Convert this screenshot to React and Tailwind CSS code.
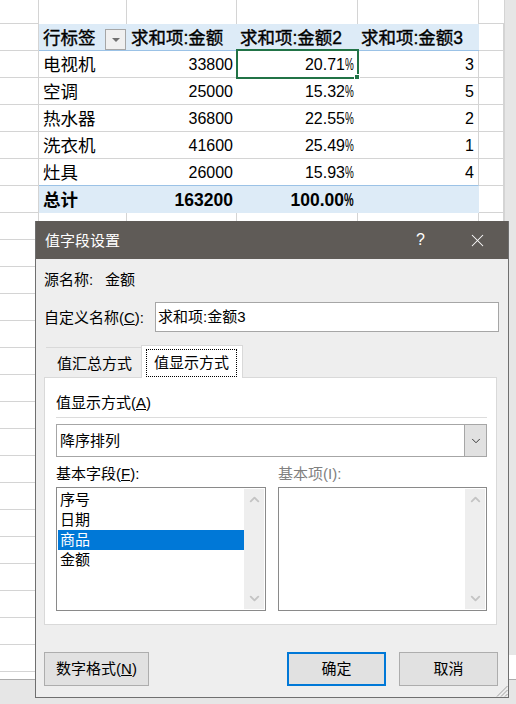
import React from 'react';
import { ChevronDown, ChevronUp, X } from 'lucide-react';

const rows = [
  ['电视机', '33800', '20.71', '3'],
  ['空调', '25000', '15.32', '5'],
  ['热水器', '36800', '22.55', '2'],
  ['洗衣机', '41600', '25.49', '1'],
  ['灶具', '26000', '15.93', '4'],
];

const headClass = "bg-[#ddebf7] !border-r-0 border-b-[#9bc2e6] text-[17.5px] [-webkit-text-stroke:0.35px_black]";
const totalClass = "bg-[#ddebf7] !border-r-0 !border-b-0 font-bold";

// the narrow percent sign of the sheet font
const Percent = ({ value, bold }) => (
  <>
    {value}
    <span className={`inline-block origin-left scale-x-[0.62] ${bold ? 'w-[10px] text-[17.5px]' : 'w-[9px] text-[16px]'}`}>%</span>
  </>
);

const Cell = ({ className = '', children }) => (
  <div className={`h-[27px] pt-[2px] border-r border-b border-[#d4d4d4] flex items-center whitespace-nowrap ${className}`}>
    {children}
  </div>
);

const Blank = ({ count }) =>
  Array.from({ length: count }).map((_, i) => <Cell key={i} />);

const Sheet = () => (
  <div className="flex-1 overflow-hidden">
    <div className="grid grid-cols-[39px_88px_110px_121px_121px_25px] text-black">
      {/* top strip */}
      <div className="h-[24px] border-r border-b border-[#d4d4d4]" />
      <div className="h-[24px] border-r border-[#d4d4d4]" />
      <div className="h-[24px] border-r border-[#d4d4d4]" />
      <div className="h-[24px] border-r border-[#d4d4d4]" />
      <div className="h-[24px] border-r border-[#d4d4d4]" />
      <div className="h-[24px] border-b border-[#d4d4d4]" />

      {/* header */}
      <Cell />
      <Cell className={`${headClass} pl-[4px] pr-[1px] justify-between`}>
        <span>行标签</span>
        <span className="self-end w-[21px] h-[21px] border border-[#a6a6a6] bg-[#f0f0f0] flex items-center justify-center">
          <span className="border-x-[4px] border-x-transparent border-t-[4px] border-t-[#707070]" />
        </span>
      </Cell>
      <Cell className={`${headClass} pl-[4px]`}>求和项:金额</Cell>
      <Cell className={`${headClass} pl-[3px]`}>求和项:金额2</Cell>
      <Cell className={`${headClass} pl-[3px]`}>求和项:金额3</Cell>
      <Cell />

      {/* data */}
      {rows.map((r, i) => (
        <React.Fragment key={r[0]}>
          <Cell />
          <Cell className={`pl-[4px] text-[17.5px] !border-r-0 ${i === 4 ? 'border-b-[#9bc2e6]' : ''}`}>{r[0]}</Cell>
          <Cell className={`justify-end pr-[4px] text-[16px] !border-r-0 ${i === 4 ? 'border-b-[#9bc2e6]' : ''}`}>{r[1]}</Cell>
          <Cell className={`relative justify-end pr-[4px] text-[16px] !border-r-0 ${i === 4 ? 'border-b-[#9bc2e6]' : ''}`}>
            <Percent value={r[2]} />
            {i === 0 && (
              <>
                <span className="absolute left-[-1px] right-[-1px] top-[-2px] bottom-[-2px] border-2 border-[#217346]" />
                <span className="absolute right-[-2px] bottom-[-3px] w-[6px] h-[6px] bg-[#217346] border border-white" />
              </>
            )}
          </Cell>
          <Cell className={`justify-end pr-[4px] text-[16px] ${i === 4 ? 'border-b-[#9bc2e6]' : ''}`}>{r[3]}</Cell>
          <Cell />
        </React.Fragment>
      ))}

      {/* total */}
      <Cell />
      <Cell className={`${totalClass} pl-[4px] text-[17.5px]`}>总计</Cell>
      <Cell className={`${totalClass} justify-end pr-[4px] text-[17.5px]`}>163200</Cell>
      <Cell className={`${totalClass} justify-end pr-[4px] text-[17.5px]`}>
        <Percent value="100.00" bold />
      </Cell>
      <Cell className={totalClass} />
      <Cell />

      <Blank count={102} />
    </div>
  </div>
);

const ListBox = ({ items, selected, className = '' }) => (
  <div className={`h-[124px] border border-[#8a8a8a] bg-white p-px flex ${className}`}>
    <div className="flex-1 pt-px">
      {items.map((item) => (
        <div
          key={item}
          className={`h-[20px] pl-[2px] leading-[20px] ${item === selected ? 'bg-[#0078d7] text-white' : ''}`}
        >
          {item}
        </div>
      ))}
    </div>
    <div className="w-[20px] bg-[#eeeeee] flex flex-col items-center justify-between py-[3px] text-[#c4c4c4]">
      <ChevronUp size={15} strokeWidth={3} />
      <ChevronDown size={15} strokeWidth={3} />
    </div>
  </div>
);

const Button = ({ className = '', children }) => (
  <button className={`h-[34px] bg-[#e1e1e1] border border-[#adadad] text-[15px] ${className}`}>
    {children}
  </button>
);

const Dialog = () => (
  <div className="absolute left-[35px] top-[221px] w-[474px] h-[477px] bg-[#eeeeee] border border-[#6f6f6f] border-t-0 text-[15px] text-black flex flex-col leading-[20px]">
    <div className="h-[38px] bg-[#5f5b57] text-white flex items-center pl-[9px]">
      <span className="flex-1 pt-px">值字段设置</span>
      <span className="text-[16px] mr-[42px]">?</span>
      <X size={21} strokeWidth={1.2} className="mr-[20px] text-white" />
    </div>

    <div className="flex items-center h-[20px] mt-[11px] pl-[8px]">
      <span className="w-[61px]">源名称:</span>
      <span>金额</span>
    </div>

    <div className="flex items-center h-[30px] mt-[12px] pl-[8px]">
      <span className="w-[111px] whitespace-nowrap pt-px">
        自定义名称(<span className="underline">C</span>):
      </span>
      <div className="w-[344px] h-[30px] bg-white border border-[#a6a6a6] pl-[2px] flex items-center">
        求和项:金额3
      </div>
    </div>

    <div className="ml-[8px] mr-[11px] mt-[13px] flex flex-col flex-1">
      <div className="flex items-end h-[32px] pl-[2px] relative z-10">
        <div className="w-[95px] h-[30px] border-t border-[#d9d9d9] pl-[11px] pt-[6px]">值汇总方式</div>
        <div className="w-[102px] h-[33px] -mb-px bg-white border border-b-0 border-[#d9d9d9] pt-[3px] pl-[4px] pr-[5px]">
          <div className="h-[28px] border border-dotted border-black text-center leading-[26px]">值显示方式</div>
        </div>
      </div>

      <div className="h-[248px] bg-white border border-[#d9d9d9] pl-[11px] pr-[9px]">
        <div className="h-[40px] pt-[15px] border-b border-[#dcdcdc]">
          值显示方式(<span className="underline">A</span>)
        </div>
        <div className="mt-[6px] h-[33px] border border-[#a6a6a6] flex items-stretch">
          <span className="flex-1 pl-[3px] flex items-center">降序排列</span>
          <span className="w-[22px] bg-[#e1e1e1] border-l border-[#a6a6a6] flex items-center justify-center text-[#222]">
            <ChevronDown size={14} strokeWidth={1.5} />
          </span>
        </div>
        <div className="grid grid-cols-[210px_209px] gap-x-[12px] mt-[6px]">
          <div className="h-[24px] pt-px">基本字段(<span className="underline">F</span>):</div>
          <div className="h-[24px] pt-px text-[#808080]">基本项(I):</div>
          <ListBox items={['序号', '日期', '商品', '金额']} selected="商品" />
          <ListBox items={[]} />
        </div>
      </div>
    </div>

    <div className="flex items-center pl-[8px] pr-[10px] pb-[11px] relative">
      <Button className="w-[105px]">
        数字格式(<span className="underline">N</span>)
      </Button>
      <Button className="w-[99px] ml-auto !border-2 !border-[#0078d7]">确定</Button>
      <Button className="w-[99px] ml-[13px]">取消</Button>
      <svg className="absolute right-0 bottom-0" width="12" height="12" viewBox="0 0 12 12" stroke="#a0a0a0" strokeWidth="1">
        <path d="M11.5 1 L1 11.5 M11.5 5 L5 11.5 M11.5 9 L9 11.5" />
      </svg>
    </div>
  </div>
);

export default function App() {
  return (
    <div className="relative w-[516px] h-[704px] overflow-hidden bg-white flex flex-col font-['Liberation_Sans','Noto_Sans_CJK_SC',sans-serif]">
      <div className="flex h-[679px]">
        <Sheet />
        <div className="w-[12px] h-[655px] bg-[#e6e6e6] border-l border-[#d4d4d4]" />
      </div>
      <div className="flex-1 bg-[#e6e6e6] border-t border-[#ababab]" />
      <Dialog />
    </div>
  );
}
